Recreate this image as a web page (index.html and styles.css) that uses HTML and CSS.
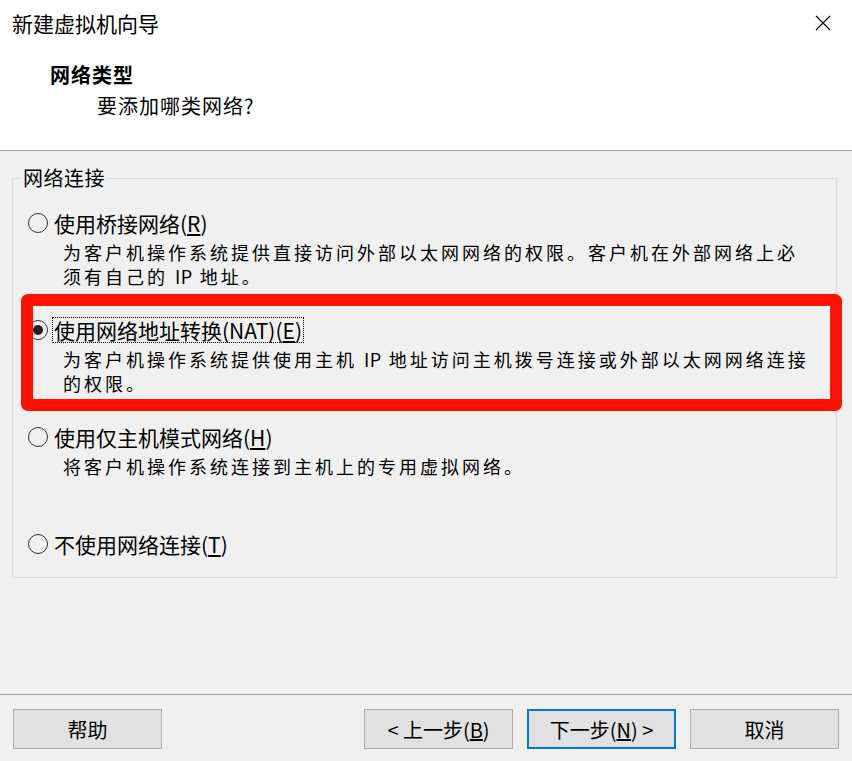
FILE: index.html
```html
<!DOCTYPE html>
<html lang="zh-CN">
<head>
<meta charset="utf-8">
<title>新建虚拟机向导</title>
<link rel="stylesheet" href="styles.css">
</head>
<body>
<div class="window">
  <header class="head">
    <div class="titlebar">
      <span class="title">新建虚拟机向导</span>
      <svg class="close" width="16" height="16" viewBox="0 0 16 16"><path d="M1 1 L15 15 M15 1 L1 15" stroke="#000" stroke-width="1.1" fill="none"/></svg>
    </div>
    <h2 class="page-title">网络类型</h2>
    <p class="page-sub">要添加哪类网络?</p>
  </header>

  <main class="main">
    <fieldset class="group">
      <legend class="legend">网络连接</legend>

      <div class="option">
        <div class="opt-row"><span class="radio"></span><span class="opt-label">使用桥接网络(<u>R</u>)</span></div>
        <p class="desc">为客户机操作系统提供直接访问外部以太网网络的权限。客户机在外部网络上必<br>须有自己的 <span class="lat">IP</span> 地址。</p>
      </div>

      <div class="option">
        <div class="opt-row"><span class="radio checked"></span><span class="opt-label focus">使用网络地址转换(NAT)(<u>E</u>)</span></div>
        <p class="desc">为客户机操作系统提供使用主机 <span class="lat">IP</span> 地址访问主机拨号连接或外部以太网网络连接<br>的权限。</p>
      </div>

      <div class="option">
        <div class="opt-row"><span class="radio"></span><span class="opt-label">使用仅主机模式网络(<u>H</u>)</span></div>
        <p class="desc">将客户机操作系统连接到主机上的专用虚拟网络。</p>
      </div>

      <div class="option last">
        <div class="opt-row"><span class="radio"></span><span class="opt-label">不使用网络连接(<u>T</u>)</span></div>
      </div>
    </fieldset>
  </main>

  <footer class="footer">
    <button class="btn">帮助</button>
    <div class="spacer"></div>
    <button class="btn">&lt; 上一步(<u>B</u>)</button>
    <button class="btn default">下一步(<u>N</u>) &gt;</button>
    <button class="btn">取消</button>
  </footer>

  <div class="highlight"></div>
</div>
</body>
</html>
```

FILE: styles.css
```css
* { box-sizing: border-box; }

html, body {
  margin: 0;
  padding: 0;
}

body {
  width: 852px;
  height: 761px;
  overflow: hidden;
  background: #f0f0f0;
  font-family: "Noto Sans CJK SC", "Noto Sans", sans-serif;
  color: #000;
}

.window {
  position: relative;
  width: 852px;
  height: 761px;
}

.head {
  height: 151px;
  background: #fff;
  border-bottom: 1px solid #a0a0a0;
}

.titlebar {
  height: 46px;
  display: flex;
  align-items: center;
  justify-content: space-between;
  padding: 0 21px 0 12px;
}

.title {
  font-size: 21px;
  line-height: 26px;
}

.close { display: block; }

.page-title {
  margin: 16px 0 0 50px;
  font-size: 20px;
  line-height: 26px;
  font-weight: bold;
  letter-spacing: 1px;
}

.page-sub {
  margin: 5px 0 0 97px;
  font-size: 20px;
  line-height: 26px;
  letter-spacing: 1px;
}

.main {
  height: 543px;
  padding-top: 16px;
}

.group {
  margin: 0 15px 0 12px;
  padding: 20px 0 19px 0;
  border: 1px solid #dcdcdc;
  min-width: 0;
}

.legend {
  margin-left: 8px;
  padding: 0 2px;
  font-size: 20px;
  line-height: 22px;
  letter-spacing: 0.5px;
}

.option {
  height: 107px;
}

.option.last {
  height: 28px;
}

.opt-row {
  height: 28px;
  display: flex;
  align-items: center;
  padding-left: 15px;
}

.radio {
  width: 20px;
  height: 20px;
  border: 1.5px solid #333;
  border-radius: 50%;
  display: flex;
  align-items: center;
  justify-content: center;
  flex: none;
}

.radio.checked::after {
  content: "";
  width: 10px;
  height: 10px;
  border-radius: 50%;
  background: #222;
}

.opt-label {
  margin-left: 5px;
  font-size: 21px;
  line-height: 24px;
  white-space: nowrap;
  padding: 0 1px;
}

.opt-label.focus {
  outline: 1px dotted #000;
  outline-offset: 0;
}

.desc {
  margin: 3px 0 0 0;
  padding-left: 50px;
  font-size: 18px;
  line-height: 24px;
  letter-spacing: 3px;
  white-space: nowrap;
}

.lat {
  letter-spacing: 0.5px;
}

.footer {
  height: 67px;
  border-top: 1px solid #a0a0a0;
  display: flex;
  align-items: flex-start;
  gap: 14px;
  padding: 14px 13px 0 13px;
}

.spacer { flex: 1; }

.btn {
  width: 149px;
  height: 40px;
  margin: 0;
  background: #e1e1e1;
  border: 1px solid #adadad;
  font-family: "Noto Sans CJK SC", "Noto Sans", sans-serif;
  font-size: 20px;
  color: #000;
  padding: 0;
}

.btn.default {
  border: 2px solid #0078d7;
}

.highlight {
  position: absolute;
  left: 21px;
  top: 294px;
  width: 821px;
  height: 117px;
  border: 12px solid #ff1200;
  border-radius: 7px;
}
```
